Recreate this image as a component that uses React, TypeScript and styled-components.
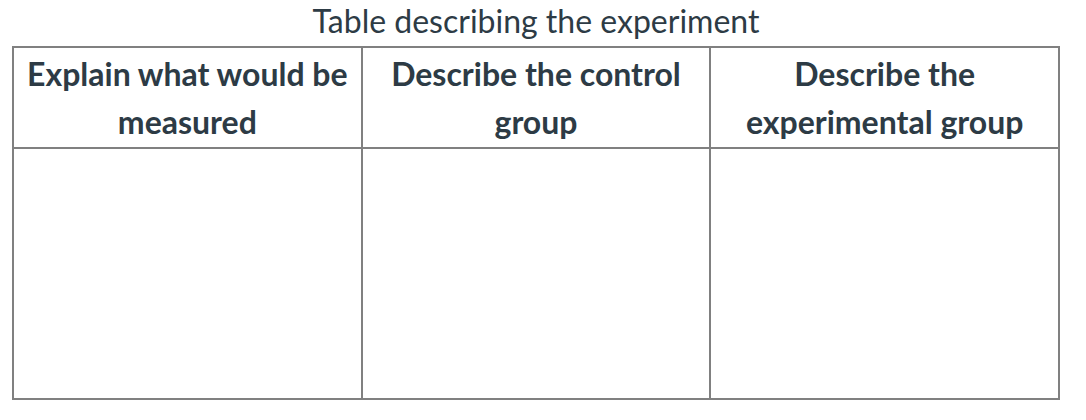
import * as React from "react";
import styled, { createGlobalStyle } from "styled-components";

const GlobalStyle = createGlobalStyle`
  html, body {
    margin: 0;
    padding: 0;
    background: #fff;
  }
  body {
    font-family: Lato, "Open Sans", "Liberation Sans", sans-serif;
    color: #2d3b45;
  }
`;

const Page = styled.div`
  padding: 0 12px;
`;

const Table = styled.table`
  width: 1048px;
  border-collapse: collapse;
  table-layout: fixed;
`;

const Caption = styled.caption`
  font-size: 32px;
  line-height: 42px;
  font-weight: 400;
  text-align: center;
  padding-bottom: 4px;
`;

const HeadCell = styled.th`
  border: 2px solid #808080;
  height: 98px;
  padding: 1px 4px 0;
  font-size: 32px;
  line-height: 48px;
  font-weight: 700;
  text-align: center;
  vertical-align: middle;
`;

const Cell = styled.td`
  border: 2px solid #808080;
  height: 249px;
  padding: 0;
`;

const headings = [
  "Explain what would be measured",
  "Describe the control group",
  "Describe the experimental group",
];

const App = () => (
  <>
    <GlobalStyle />
    <Page>
      <Table>
        <Caption>Table describing the experiment</Caption>
        <thead>
          <tr>
            {headings.map((h) => (
              <HeadCell key={h}>{h}</HeadCell>
            ))}
          </tr>
        </thead>
        <tbody>
          <tr>
            {headings.map((h) => (
              <Cell key={h} />
            ))}
          </tr>
        </tbody>
      </Table>
    </Page>
  </>
);

export default App;
